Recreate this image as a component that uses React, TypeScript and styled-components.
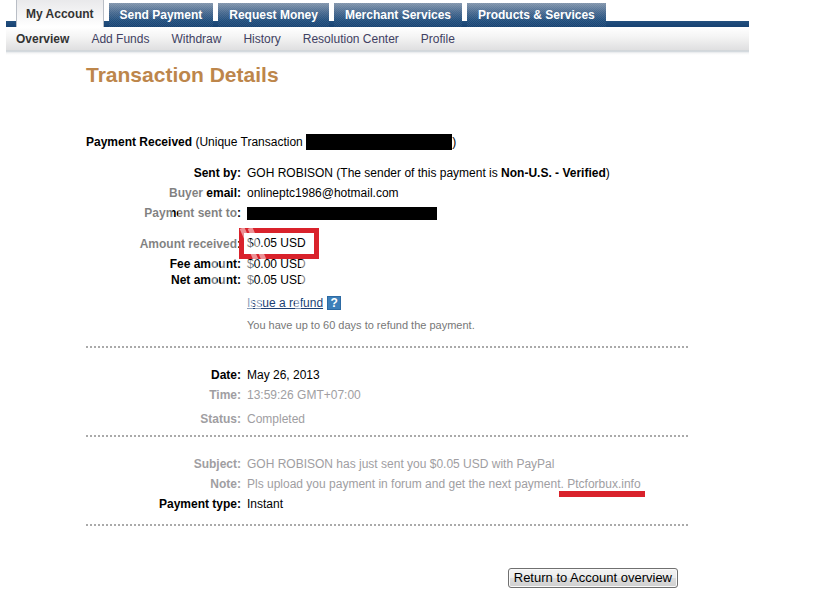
import React from "react";
import styled, { createGlobalStyle, css } from "styled-components";

const GlobalStyle = createGlobalStyle`
  * { box-sizing: border-box; }
  body {
    margin: 0;
    background: #fff;
    color: #000;
    font: 12px/20px "Liberation Sans", Arial, Helvetica, sans-serif;
  }
`;

const Header = styled.header`
  margin: 0 70px 0 6px;
`;

const Tabs = styled.nav`
  display: flex;
  align-items: flex-end;
  gap: 5px;
  height: 27px;
  padding-left: 10px;
  background: linear-gradient(#23507f, #174272) bottom / 100% 6px no-repeat;
`;

const Tab = styled.a<{ $active?: boolean }>`
  padding: 0 11px;
  height: 24px;
  line-height: 24px;
  font-weight: bold;
  white-space: nowrap;
  text-decoration: none;
  color: #fff;
  background:
    repeating-conic-gradient(rgba(255, 255, 255, 0.08) 0 25%, transparent 0 50%) 0 0 / 2px 2px,
    linear-gradient(#8295ac, #47698f 40%, #1f4d7c 75%, #174272);
  ${(p) =>
    p.$active &&
    css`
      height: 27px;
      padding: 0 9px;
      line-height: 28px;
      color: #333;
      background: linear-gradient(#e9e9eb, #fff);
      border: solid #b9bec6;
      border-width: 0 1px;
    `}
`;

const SubNav = styled.nav`
  display: flex;
  gap: 22px;
  height: 28px;
  padding-left: 10px;
  line-height: 24px;
  background: linear-gradient(
    #fff 0,
    #f4f4f4 10px,
    #dfdfe0 23px,
    #c6cfd5 24px,
    #e2e5e8 25px,
    #f4f5f6 26px,
    #fff 28px
  );
`;

const SubLink = styled.a<{ $active?: boolean }>`
  color: ${(p) => (p.$active ? "#333" : "#414162")};
  font-weight: ${(p) => (p.$active ? "bold" : "normal")};
  text-decoration: none;
  white-space: nowrap;
`;

const Main = styled.main`
  position: relative;
  margin: 8px 131px 0 86px;
`;

const Title = styled.h1`
  margin: 0;
  font-size: 21px;
  line-height: 24px;
  color: #bd864b;
`;

const Summary = styled.p`
  display: flex;
  align-items: center;
  margin: 45px 0 11px;
  white-space: pre;
`;

const Redacted = styled.span<{ $width: number; $height: number }>`
  display: inline-block;
  width: ${(p) => p.$width}px;
  height: ${(p) => p.$height}px;
  background: #000;
`;

const Section = styled.dl`
  margin: 0;
`;

const Row = styled.div<{ $muted?: boolean; $gap?: number; $tight?: boolean }>`
  display: grid;
  grid-template-columns: 155px 1fr;
  column-gap: 6px;
  align-items: center;
  height: ${(p) => (p.$tight ? 16 : 20)}px;
  line-height: ${(p) => (p.$tight ? 16 : 20)}px;
  margin-top: ${(p) => p.$gap ?? 0}px;
  color: ${(p) => (p.$muted ? "#a09ea2" : "#000")};
  white-space: nowrap;
`;

const Term = styled.dt`
  text-align: right;
  font-weight: bold;
`;

const Value = styled.dd`
  display: flex;
  align-items: center;
  margin: 0;
  white-space: pre;
`;

const AmountBox = styled.span`
  margin: -6px 0 -5px -8px;
  padding: 0 8px 0 3px;
  border: 5px solid #d9222b;
  line-height: 21px;
`;

const RefundLink = styled.a`
  color: #1b3f74;
  text-decoration: underline;
`;

const HelpButton = styled.button`
  width: 14px;
  height: 14px;
  margin-left: 4px;
  padding: 0;
  border: 1px solid #2d6aa3;
  background: #3d7fb9;
  color: #fff;
  font: bold 12px/12px "Liberation Sans", Arial, sans-serif;
`;

const Hint = styled.span`
  color: #777;
  font-size: 11px;
`;

const Divider = styled.hr<{ $before: number; $after: number }>`
  height: 2px;
  margin: ${(p) => p.$before}px 0 ${(p) => p.$after}px;
  border: 0;
  background: repeating-linear-gradient(90deg, #aaa 0 2px, transparent 2px 4px);
`;

const Underscored = styled.span`
  position: relative;
  &::after {
    content: "";
    position: absolute;
    left: -8px;
    right: -4px;
    bottom: -3px;
    height: 6px;
    background: #d9222b;
  }
`;

const Actions = styled.div`
  display: flex;
  justify-content: flex-end;
  margin: 42px 10px 0 0;
`;

const ReturnButton = styled.button`
  height: 20px;
  padding: 0 5px;
  border: 1px solid #707070;
  border-radius: 3px;
  background: linear-gradient(#f3f3f3, #ebebeb 50%, #dcdcdc 50%, #cfcfcf);
  box-shadow: inset 0 0 0 1px #fafafa;
  color: #000;
  font: 13px/16px "Liberation Sans", Arial, sans-serif;
  white-space: nowrap;
`;

const Watermark = styled.svg`
  position: absolute;
  left: 54px;
  top: 123px;
  width: 190px;
  height: 170px;
  pointer-events: none;
`;

const tabs = ["My Account", "Send Payment", "Request Money", "Merchant Services", "Products & Services"];
const links = ["Overview", "Add Funds", "Withdraw", "History", "Resolution Center", "Profile"];

export default function App() {
  return (
    <>
      <GlobalStyle />
      <Header>
        <Tabs aria-label="Main">
          {tabs.map((t, i) => (
            <Tab key={t} href="#" $active={i === 0}>{t}</Tab>
          ))}
        </Tabs>
        <SubNav aria-label="My Account">
          {links.map((t, i) => (
            <SubLink key={t} href="#" $active={i === 0}>{t}</SubLink>
          ))}
        </SubNav>
      </Header>
      <Main>
        <Title>Transaction Details</Title>
        <Summary>
          <b>Payment Received</b> (Unique Transaction <Redacted $width={146} $height={16} />)
        </Summary>
        <Section>
          <Row>
            <Term>Sent by:</Term>
            <Value>GOH ROBISON (The sender of this payment is <b>Non-U.S. - Verified</b>)</Value>
          </Row>
          <Row>
            <Term>Buyer email:</Term>
            <Value>onlineptc1986@hotmail.com</Value>
          </Row>
          <Row>
            <Term>Payment sent to:</Term>
            <Value><Redacted $width={190} $height={13} /></Value>
          </Row>
          <Row $gap={11}>
            <Term>Amount received:</Term>
            <Value><AmountBox>$0.05 USD</AmountBox></Value>
          </Row>
          <Row $tight $gap={2}>
            <Term>Fee amount:</Term>
            <Value>$0.00 USD</Value>
          </Row>
          <Row $tight>
            <Term>Net amount:</Term>
            <Value>$0.05 USD</Value>
          </Row>
          <Row $gap={5}>
            <Term />
            <Value>
              <RefundLink href="#">Issue a refund</RefundLink>
              <HelpButton type="button" aria-label="Help">?</HelpButton>
            </Value>
          </Row>
          <Row $gap={2}>
            <Term />
            <Value><Hint>You have up to 60 days to refund the payment.</Hint></Value>
          </Row>
        </Section>
        <Divider $before={11} $after={17} />
        <Section>
          <Row><Term>Date:</Term><Value>May 26, 2013</Value></Row>
          <Row $muted><Term>Time:</Term><Value>13:59:26 GMT+07:00</Value></Row>
          <Row $muted $gap={4}><Term>Status:</Term><Value>Completed</Value></Row>
        </Section>
        <Divider $before={6} $after={17} />
        <Section>
          <Row $muted><Term>Subject:</Term><Value>GOH ROBISON has just sent you $0.05 USD with PayPal</Value></Row>
          <Row $muted>
            <Term>Note:</Term>
            <Value>Pls upload you payment in forum and get the next payment. <Underscored>Ptcforbux.info</Underscored></Value>
          </Row>
          <Row><Term>Payment type:</Term><Value>Instant</Value></Row>
        </Section>
        <Divider $before={10} $after={0} />
        <Actions>
          <ReturnButton type="button">Return to Account overview</ReturnButton>
        </Actions>
        <Watermark viewBox="0 0 190 170" aria-hidden="true">
          <g fill="none" stroke="#fff" strokeOpacity="0.5">
            <path d="M28 7H63M4 28H32M38 28H98M0 59H98" strokeWidth="17" />
            <path d="M102 42L116 74M110 42L124 74" strokeWidth="5" />
            <path d="M74 70V102M84 70V102M110 74V102M164 74V102M110 110V124M118 110V124M158 110V124" strokeWidth="6" />
          </g>
        </Watermark>
      </Main>
    </>
  );
}
